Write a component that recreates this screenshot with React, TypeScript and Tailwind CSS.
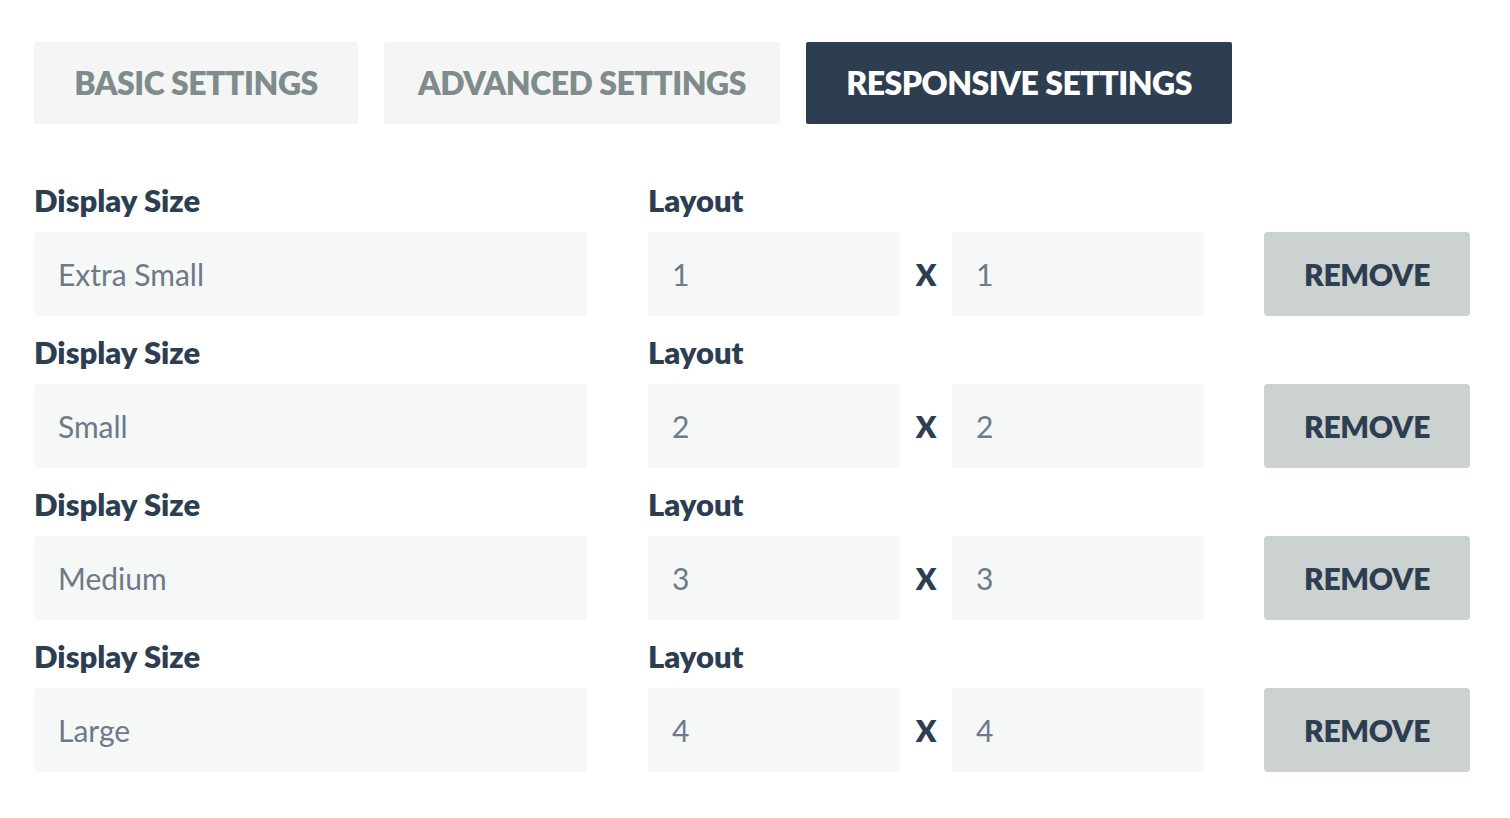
import React from "react";

const rows = [
  { size: "Extra Small", n: "1" },
  { size: "Small", n: "2" },
  { size: "Medium", n: "3" },
  { size: "Large", n: "4" },
];

const tabs = [
  { label: "BASIC SETTINGS", w: "w-[324px]", active: false },
  { label: "ADVANCED SETTINGS", w: "w-[396px]", active: false },
  { label: "RESPONSIVE SETTINGS", w: "w-[426px]", active: true },
];

export default function App() {
  return (
    <div
      className="min-h-screen bg-white pl-[34px] pt-[42px] text-[#2c3e50]"
      style={{ fontFamily: "Lato, 'Open Sans', sans-serif" }}
    >
      <div className="flex gap-[26px]">
        {tabs.map((t) => (
          <button
            key={t.label}
            className={`${t.w} h-[82px] rounded-[2px] text-[32px] font-extrabold tracking-[-0.5px] ${
              t.active ? "bg-[#2c3e50] text-white" : "bg-[#f5f5f5] text-[#7f8c8d]"
            }`}
          >
            {t.label}
          </button>
        ))}
      </div>

      <div className="mt-[58px] flex flex-col gap-[18px]">
        {rows.map((r) => (
          <div key={r.size} className="flex">
            <div className="w-[553px]">
              <div className="h-[36px] text-[31px] font-extrabold leading-[36px] mb-[14px]">
                Display Size
              </div>
              <div className="flex h-[84px] items-center rounded-[4px] bg-[#f6f7f7] pl-[24px] text-[30px] text-[#6c7a89]">
                {r.size}
              </div>
            </div>
            <div className="ml-[61px]">
              <div className="h-[36px] text-[31px] font-extrabold leading-[36px] mb-[14px]">
                Layout
              </div>
              <div className="flex items-center">
                <div className="flex h-[84px] w-[252px] items-center rounded-[4px] bg-[#f6f7f7] pl-[24px] text-[30px] text-[#6c7a89]">
                  {r.n}
                </div>
                <div className="w-[52px] text-center text-[30px] font-extrabold">X</div>
                <div className="flex h-[84px] w-[252px] items-center rounded-[4px] bg-[#f6f7f7] pl-[24px] text-[30px] text-[#6c7a89]">
                  {r.n}
                </div>
                <button className="ml-[60px] h-[84px] w-[206px] rounded-[4px] bg-[#ccd1d1] text-[30px] font-extrabold tracking-[-0.3px]">
                  REMOVE
                </button>
              </div>
            </div>
          </div>
        ))}
      </div>
    </div>
  );
}
